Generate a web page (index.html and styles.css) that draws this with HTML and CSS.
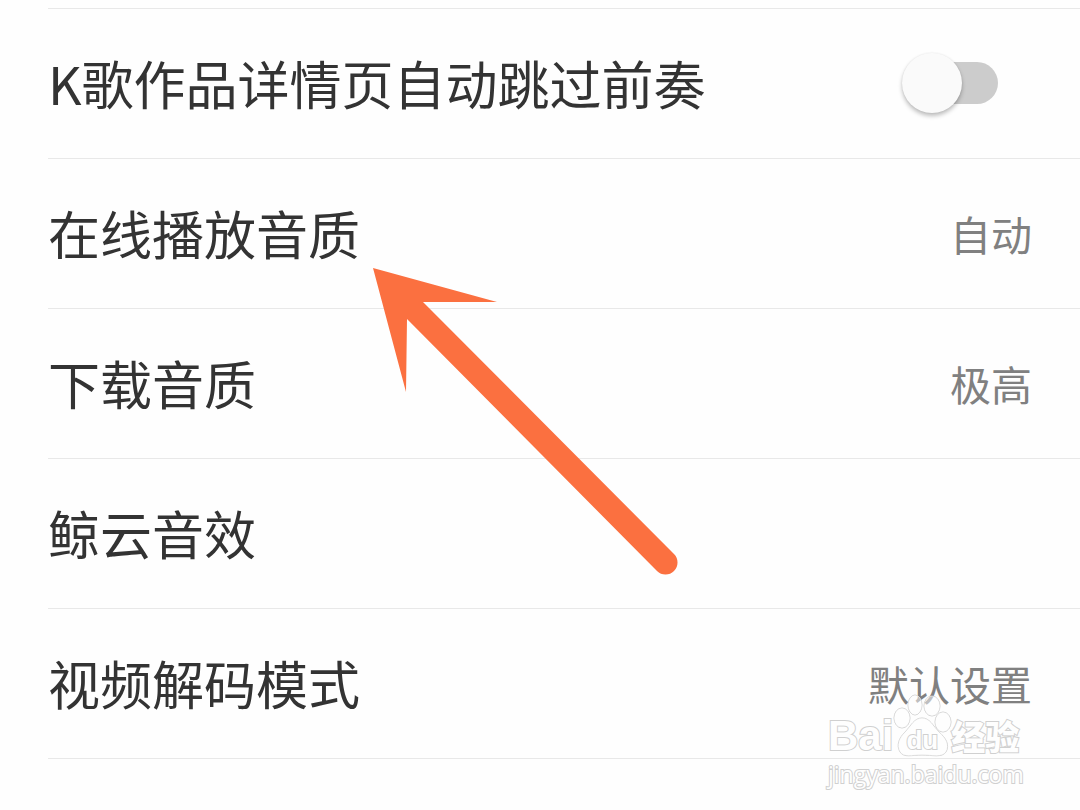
FILE: index.html
```html
<!DOCTYPE html>
<html lang="zh-CN">
<head>
<meta charset="utf-8">
<meta name="viewport" content="width=device-width, initial-scale=1">
<title>设置</title>
<link rel="stylesheet" href="styles.css">
</head>
<body>
<main class="settings">
  <div class="row">
    <label class="name" for="skip-intro">K歌作品详情页自动跳过前奏</label>
    <input class="switch" type="checkbox" role="switch" id="skip-intro">
  </div>
  <button class="row" type="button"><span class="name">在线播放音质</span><span class="value">自动</span></button>
  <button class="row" type="button"><span class="name">下载音质</span><span class="value">极高</span></button>
  <button class="row" type="button"><span class="name">鲸云音效</span></button>
  <button class="row" type="button"><span class="name">视频解码模式</span><span class="value">默认设置</span></button>
</main>

<svg class="arrow" viewBox="0 0 306 308" aria-hidden="true">
  <path d="M0 0 124 34H50L301 286A12 12 0 0 1 284 303L34 51 33 124Z"/>
</svg>

<div class="watermark">
  <div class="brand">
    <span class="latin">Bai</span>
    <span class="paw">
      <svg class="paw-shape" viewBox="0 0 60 64" aria-hidden="true">
        <ellipse cx="9" cy="24" rx="8" ry="10"/>
        <ellipse cx="22" cy="11" rx="7" ry="10"/>
        <ellipse cx="39" cy="12" rx="8" ry="10"/>
        <ellipse cx="50" cy="28" rx="8" ry="10"/>
        <path d="M29 24C37 24 40 32 46 38C53 44 57 51 53 58C49 64 39 61 29 61C19 61 11 64 7 58C3 51 6 44 12 38C18 32 21 24 29 24Z"/>
      </svg>
      <span class="du">du</span>
    </span>
    <span class="han">经验</span>
  </div>
  <div class="site">jingyan.baidu.com</div>
</div>
</body>
</html>
```
FILE: styles.css
```css
* {
  box-sizing: border-box;
}

body {
  margin: 0;
  background: #fefefe;
  color: #333;
  font-family: "Noto Sans CJK SC", "Noto Sans", sans-serif;
  overflow-x: hidden;
}

.settings {
  margin-top: 8px;
  margin-left: 48px;
  border-top: 1px solid #e8e8e8;
}

.row {
  display: flex;
  align-items: center;
  justify-content: space-between;
  width: 100%;
  min-height: 150px;
  padding: 0 48px 2px 0;
  border: 0;
  border-bottom: 1px solid #e8e8e8;
  background: none;
  color: inherit;
  font: inherit;
  text-align: left;
}

.name {
  font-size: 52px;
  line-height: 76px;
}

.value {
  color: #808080;
  font-size: 41px;
  line-height: 60px;
}

.switch {
  appearance: none;
  position: relative;
  width: 86px;
  height: 42px;
  margin: 0 34px 0 0;
  border-radius: 21px;
  background: #ccc;
}

.switch::before {
  content: "";
  position: absolute;
  top: -9px;
  left: -10px;
  width: 60px;
  height: 60px;
  border-radius: 50%;
  background: #fafafa;
  box-shadow: 0 3px 4px rgba(0, 0, 0, 0.25), 0 0 2px rgba(0, 0, 0, 0.08);
}

.switch:checked::before {
  left: 36px;
}

.arrow {
  position: absolute;
  top: 268px;
  left: 373px;
  width: 306px;
  fill: #fb7040;
}

.watermark {
  position: absolute;
  top: 694px;
  left: 828px;
  color: #fefefe;
  paint-order: stroke fill;
  -webkit-text-stroke: 2px #d0d0d0;
}

.brand {
  display: flex;
  align-items: flex-end;
  height: 64px;
}

.latin {
  font: bold 42px/44px "Liberation Sans", Arial, sans-serif;
}

.paw {
  position: relative;
  width: 58px;
  height: 64px;
}

.paw-shape {
  display: block;
  width: 60px;
  height: 64px;
  fill: rgba(254, 254, 254, 0.5);
  stroke: #d0d0d0;
}

.du {
  position: absolute;
  top: 30px;
  left: 0;
  width: 100%;
  font: bold 26px/32px "Liberation Sans", Arial, sans-serif;
  text-align: center;
}

.han {
  font-size: 34px;
  font-weight: 900;
  line-height: 44px;
}

.site {
  font: 23px/32px "Open Sans", sans-serif;
}
```
